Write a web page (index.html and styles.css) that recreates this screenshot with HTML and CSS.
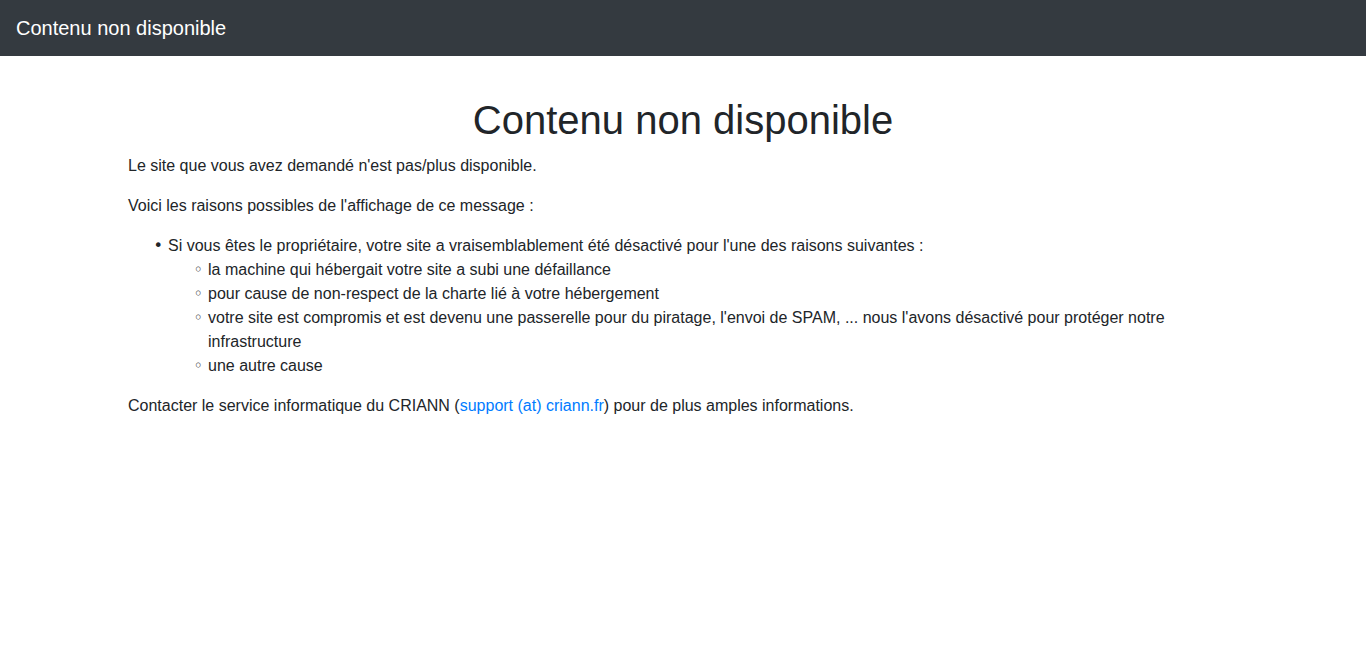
FILE: index.html
```
<!DOCTYPE html>
<html lang="fr">
<head>
<meta charset="utf-8">
<title>Contenu non disponible</title>
<link rel="stylesheet" href="styles.css">
</head>
<body>
<nav class="navbar">
  <span class="brand">Contenu non disponible</span>
</nav>
<main class="container">
  <h1 class="title">Contenu non disponible</h1>
  <p>Le site que vous avez demandé n'est pas/plus disponible.</p>
  <p>Voici les raisons possibles de l'affichage de ce message :</p>
  <ul class="list">
    <li>Si vous êtes le propriétaire, votre site a vraisemblablement été désactivé pour l'une des raisons suivantes :
      <ul class="sublist">
        <li>la machine qui hébergait votre site a subi une défaillance</li>
        <li>pour cause de non-respect de la charte lié à votre hébergement</li>
        <li>votre site est compromis et est devenu une passerelle pour du piratage, l'envoi de SPAM, ... nous l'avons désactivé pour protéger notre infrastructure</li>
        <li>une autre cause</li>
      </ul>
    </li>
  </ul>
  <p>Contacter le service informatique du CRIANN (<a class="link" href="#">support (at) criann.fr</a>) pour de plus amples informations.</p>
</main>
</body>
</html>
```
FILE: styles.css
```
* { box-sizing: border-box; }
html, body {
  margin: 0;
  padding: 0;
  background: #fff;
}
body {
  font-family: "Liberation Sans", Arial, sans-serif;
  font-size: 16px;
  line-height: 1.5;
  color: #212529;
}
.navbar {
  height: 56px;
  background: #343a40;
  display: flex;
  align-items: center;
  padding: 0 16px;
}
.brand {
  color: #fff;
  font-size: 20px;
  line-height: 30px;
}
.container {
  width: 1140px;
  margin: 0 auto;
  padding: 40px 15px 0;
}
.title {
  font-size: 40px;
  font-weight: 500;
  line-height: 1.2;
  text-align: center;
  margin: 0 0 10px;
}
p {
  margin: 0 0 16px;
}
.list {
  margin: 0 0 16px;
  padding-left: 40px;
  list-style-type: "\2022  ";
}
.sublist {
  margin: 0;
  padding-left: 40px;
  list-style-type: "\25E6  ";
}
.list li::marker {
  font-family: "DejaVu Sans", sans-serif;
}
.link {
  color: #007bff;
  text-decoration: none;
}
```
